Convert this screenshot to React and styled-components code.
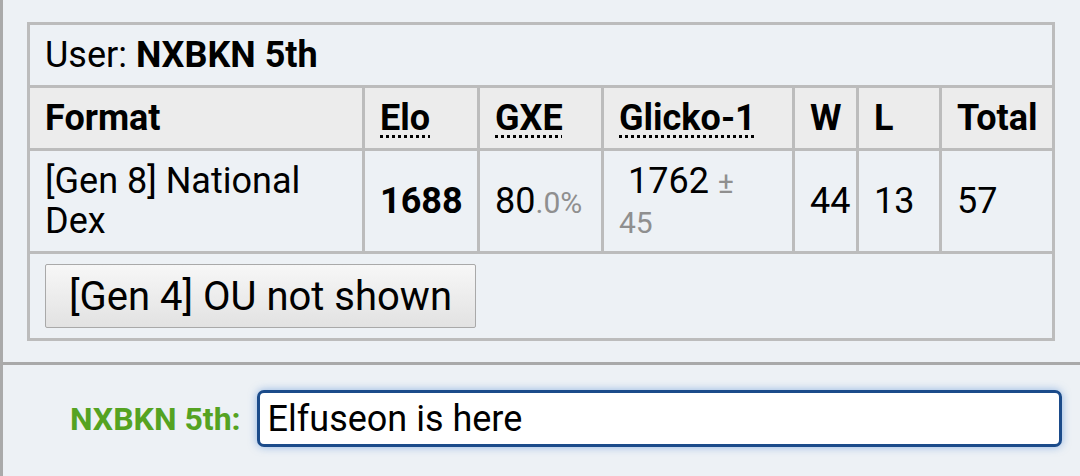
import styled, { createGlobalStyle } from "styled-components"

const Global = createGlobalStyle`
  html, body { margin: 0; padding: 0; }
  body { font-family: Roboto, "Noto Sans", sans-serif; color: #000; }
`

export default function App() {
    return (
        <>
            <Global />
            <Chat>
                <Message>
                    <Ladder>
                        <colgroup>
                            <col style={{ width: 335 }} />
                            <col style={{ width: 115 }} />
                            <col style={{ width: 124 }} />
                            <col style={{ width: 191 }} />
                            <col style={{ width: 64 }} />
                            <col style={{ width: 83 }} />
                            <col style={{ width: 113 }} />
                        </colgroup>
                        <tbody>
                            <tr>
                                <UserCell colSpan={7}>User: <strong>NXBKN 5th</strong></UserCell>
                            </tr>
                            <tr>
                                <Th>Format</Th>
                                <Th><Abbr>Elo</Abbr></Th>
                                <Th><Abbr>GXE</Abbr></Th>
                                <Th><Abbr>Glicko-1</Abbr></Th>
                                <Th>W</Th>
                                <Th>L</Th>
                                <Th>Total</Th>
                            </tr>
                            <tr>
                                <Td>[Gen 8] National Dex</Td>
                                <Td><strong>1688</strong></Td>
                                <Td>80<Small>.0%</Small></Td>
                                <Td $narrow>{"\u00a0"}1762 <Small>± 45</Small></Td>
                                <Td>44</Td>
                                <Td>13</Td>
                                <Td>57</Td>
                            </tr>
                            <tr>
                                <ButtonCell colSpan={7}>
                                    <Button>[Gen 4] OU not shown</Button>
                                </ButtonCell>
                            </tr>
                        </tbody>
                    </Ladder>
                </Message>
                <Composer>
                    <Label>NXBKN 5th:</Label>
                    <Input defaultValue="Elfuseon is here" />
                </Composer>
            </Chat>
        </>
    )
}

const Chat = styled.div`
width: 1077px;
height: 476px;
background: #edf1f5;
border-left: 3px solid #aaaaaa;
overflow: hidden;
`

const Message = styled.div`
padding: 22px 25px 21px 24px;
`

const Ladder = styled.table`
width: 1028px;
table-layout: fixed;
border-collapse: collapse;
border: 3px solid #bcbcbc;
font-size: 36px;
line-height: 40px;
td, th {
    border: 3px solid #bcbcbc;
    padding: 10px 15px;
    text-align: left;
    vertical-align: middle;
}
`

const UserCell = styled.td`
strong { font-weight: bold; }
`

const Th = styled.th`
background: #ececec;
font-weight: bold;
`

const Td = styled.td`
strong { font-weight: bold; }
&& { padding-right: ${p => (p.$narrow ? "40px" : "15px")}; }
`

const Abbr = styled.span`
text-decoration: underline dotted;
text-decoration-thickness: 3px;
text-underline-offset: 5px;
`

const Small = styled.small`
font-size: 30px;
line-height: 1;
color: #8f8f8f;
`

const ButtonCell = styled.td`
&& { padding: 10px 15px 10px 15px; }
`

const Button = styled.button`
display: block;
height: 64px;
padding: 0 23px;
font-family: Roboto, "Noto Sans", sans-serif;
font-size: 40px;
color: #000;
background: linear-gradient(#f7f7f7, #e2e2e2);
border: 1.5px solid #a9a9a9;
border-radius: 2px;
`

const Composer = styled.div`
display: flex;
align-items: center;
border-top: 3px solid #a9a9a9;
padding: 25px 18px 0 67px;
gap: 16px;
`

const Label = styled.span`
font-size: 32px;
font-weight: bold;
color: #55a322;
white-space: nowrap;
`

const Input = styled.input`
flex: 1;
height: 57px;
box-sizing: border-box;
padding: 0 8px;
font-family: Roboto, "Noto Sans", sans-serif;
font-size: 36px;
color: #000;
background: #fff;
border: 3px solid #1b4b8a;
border-radius: 7px;
box-shadow: 0 0 9px rgba(70, 130, 210, 0.55);
outline: none;
`
